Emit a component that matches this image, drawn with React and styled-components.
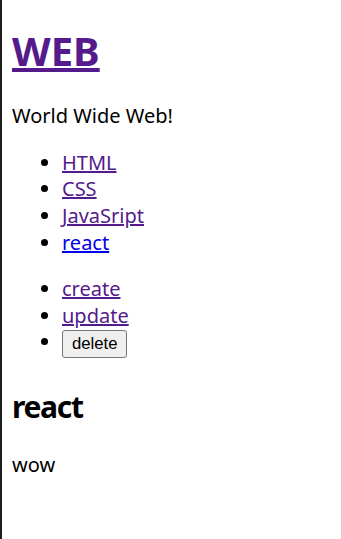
import React, { useState } from 'react';
import styled, { createGlobalStyle } from 'styled-components';

const GlobalStyle = createGlobalStyle`
  html {
    min-height: 100%;
    box-sizing: border-box;
    border-left: 2px solid #1e1e1e;
  }
  body {
    margin: 10px;
    font-family: "Noto Sans", "Noto Sans CJK KR", sans-serif;
    font-size: 20px;
    line-height: 1.33;
    color: #000;
  }
`;

const Title = styled.h1`
  font-size: 40px;
  font-weight: 700;
  margin: 14px 0 26px;
`;

const Link = styled.a`
  color: ${props => (props.$visited ? '#551a8b' : '#0000ee')};
  text-decoration: underline;
  cursor: pointer;
`;

const Text = styled.p`
  margin: 20px 0;
`;

const List = styled.ul`
  margin: 20px 0;
  padding-left: 50px;
  list-style: disc;
`;

const Item = styled.li`
  line-height: 1.33;
`;

const Button = styled.button`
  font-family: "Liberation Sans", Arial, sans-serif;
  font-size: 16.7px;
  line-height: normal;
  padding: 3px 9px;
  color: #000;
  background: #efefef;
  border: 1px solid #767676;
  border-radius: 3px;
`;

const SubTitle = styled.h2`
  font-size: 30px;
  font-weight: 700;
  letter-spacing: -1.3px;
  margin: 29px 0 25px;
`;

const topics = [
  { id: 1, title: 'HTML', visited: true },
  { id: 2, title: 'CSS', visited: true },
  { id: 3, title: 'JavaSript', visited: true },
  { id: 4, title: 'react', visited: false },
];

function Header() {
  return (
    <header>
      <Title>
        <Link href="/" $visited onClick={e => e.preventDefault()}>WEB</Link>
      </Title>
      <Text>World Wide Web!</Text>
    </header>
  );
}

function Nav({ onSelect }) {
  return (
    <nav>
      <List>
        {topics.map(t => (
          <Item key={t.id}>
            <Link
              href={'/read/' + t.id}
              $visited={t.visited}
              onClick={e => { e.preventDefault(); onSelect(t); }}
            >
              {t.title}
            </Link>
          </Item>
        ))}
      </List>
    </nav>
  );
}

function Control() {
  return (
    <List>
      <Item><Link href="/create" $visited onClick={e => e.preventDefault()}>create</Link></Item>
      <Item><Link href="/update" $visited onClick={e => e.preventDefault()}>update</Link></Item>
      <Item><Button type="button">delete</Button></Item>
    </List>
  );
}

function Article({ title, body }) {
  return (
    <article>
      <SubTitle>{title}</SubTitle>
      <Text>{body}</Text>
    </article>
  );
}

export default function App() {
  const [selected, setSelected] = useState(topics[3]);
  return (
    <>
      <GlobalStyle />
      <Header />
      <Nav onSelect={setSelected} />
      <Control />
      <Article title={selected.title} body="wow" />
    </>
  );
}
